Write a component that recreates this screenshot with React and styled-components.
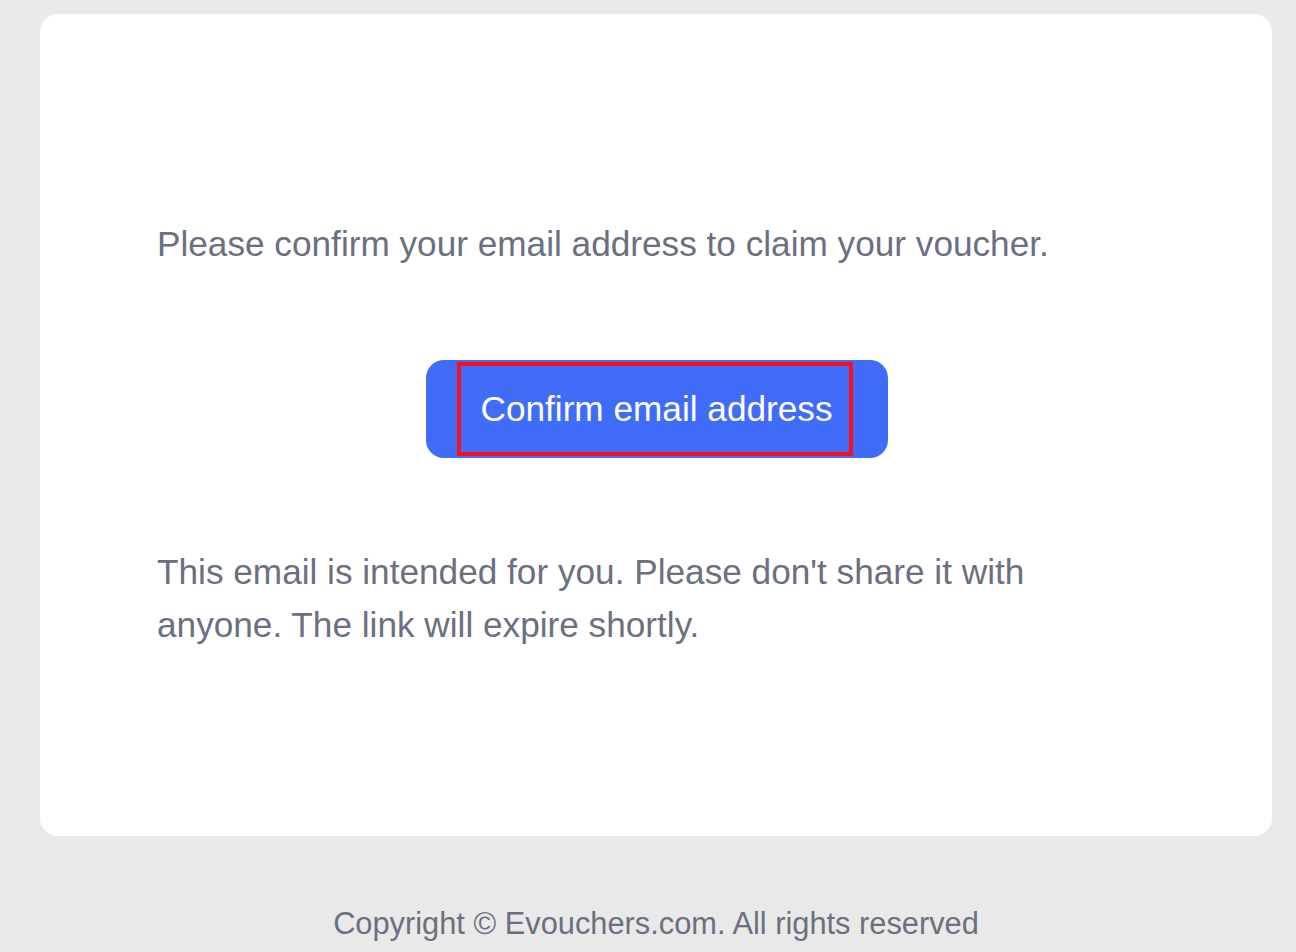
import React from "react";
import styled, { createGlobalStyle } from "styled-components";

const Global = createGlobalStyle`
  html, body {
    margin: 0;
    padding: 0;
    background: #e9e9e9;
  }
  body {
    font-family: "Liberation Sans", Arial, Helvetica, sans-serif;
  }
`;

const Page = styled.div`
  min-height: 952px;
  padding: 14px 24px 0 40px;
  box-sizing: border-box;
`;

const Card = styled.div`
  background: #ffffff;
  border-radius: 18px;
  height: 822px;
  box-sizing: border-box;
  padding: 204px 117px 0 117px;
  display: flex;
  flex-direction: column;
`;

const Text = styled.p`
  margin: 0;
  color: #6b7080;
  font-size: 35.2px;
  line-height: 52.8px;
  max-width: 990px;
`;

const ButtonRow = styled.div`
  display: flex;
  justify-content: center;
  margin: 89px 0 88px;
  padding-left: 1px;
`;

const ButtonShell = styled.div`
  background: #416cf9;
  border-radius: 18px;
  padding: 2px 35px 2px 31px;
  display: flex;
`;

const ButtonLink = styled.a`
  display: block;
  border: 4px solid #f5101c;
  color: #ffffff;
  text-decoration: none;
  font-size: 35.2px;
  line-height: 86px;
  padding: 0 16px 0 20px;
  white-space: nowrap;
`;

const Footer = styled.div`
  margin-top: 65px;
  text-align: center;
  color: #6b7080;
  font-size: 30.8px;
  line-height: 46.2px;
`;

export default function App() {
  return (
    <>
      <Global />
      <Page>
        <Card>
          <Text>Please confirm your email address to claim your voucher.</Text>
          <ButtonRow>
            <ButtonShell>
              <ButtonLink href="#">Confirm email address</ButtonLink>
            </ButtonShell>
          </ButtonRow>
          <Text>
            This email is intended for you. Please don't share it with anyone.
            The link will expire shortly.
          </Text>
        </Card>
        <Footer>Copyright © Evouchers.com. All rights reserved</Footer>
      </Page>
    </>
  );
}
